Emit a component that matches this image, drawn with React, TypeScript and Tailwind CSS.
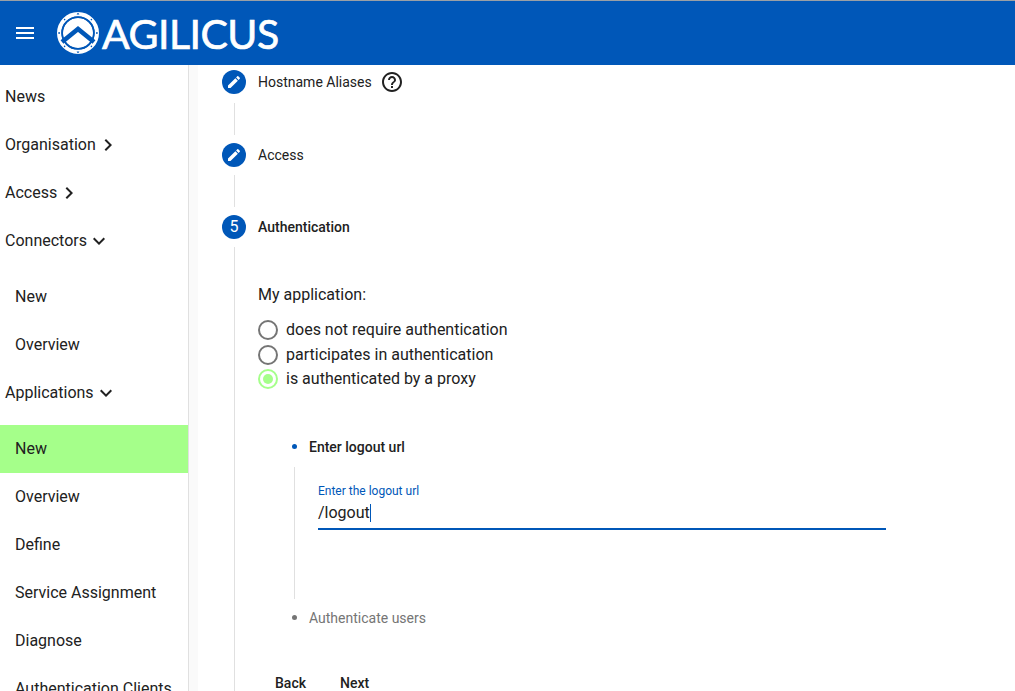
type NavItem = {
  label: string;
  sub?: boolean;
  active?: boolean;
  arrow?: "right" | "down";
  gap?: boolean;
};

const NAV: NavItem[] = [
  { label: "News" },
  { label: "Organisation", arrow: "right" },
  { label: "Access", arrow: "right" },
  { label: "Connectors", arrow: "down" },
  { label: "New", sub: true, gap: true },
  { label: "Overview", sub: true },
  { label: "Applications", arrow: "down" },
  { label: "New", sub: true, active: true, gap: true },
  { label: "Overview", sub: true },
  { label: "Define", sub: true },
  { label: "Service Assignment", sub: true },
  { label: "Diagnose", sub: true },
  { label: "Authentication Clients", sub: true },
];

// material icon paths
function Icon({ d, size = 24 }: { d: string; size?: number }) {
  return (
    <svg width={size} height={size} viewBox="0 0 24 24" fill="currentColor" className="shrink-0">
      <path d={d} />
    </svg>
  );
}

const MENU = "M3 18h18v-2H3v2zm0-5h18v-2H3v2zm0-7v2h18V6H3z";
const EDIT =
  "M3 17.25V21h3.75L17.81 9.94l-3.75-3.75L3 17.25zM20.71 7.04c.39-.39.39-1.02 0-1.41l-2.34-2.34c-.39-.39-1.02-.39-1.41 0l-1.83 1.83 3.75 3.75 1.83-1.83z";
const HELP =
  "M11 18h2v-2h-2v2zm1-16C6.48 2 2 6.48 2 12s4.48 10 10 10 10-4.48 10-10S17.52 2 12 2zm0 18c-4.41 0-8-3.59-8-8s3.59-8 8-8 8 3.59 8 8-3.59 8-8 8zm0-14c-2.21 0-4 1.79-4 4h2c0-1.1.9-2 2-2s2 .9 2 2c0 2-3 1.75-3 5h2c0-2.25 3-2.5 3-5 0-2.21-1.79-4-4-4z";
const CHEVRON_RIGHT = "M10 6L8.59 7.41 13.17 12l-4.58 4.59L10 18l6-6z";
const CHEVRON_DOWN = "M16.59 8.59L12 13.17 7.41 8.59 6 10l6 6 6-6z";

function Logo() {
  return (
    <svg width="44" height="44" viewBox="0 0 44 44" className="shrink-0">
      <circle cx="22" cy="22" r="18.9" fill="none" stroke="#fff" strokeWidth="4.2" />
      <circle cx="22" cy="22" r="15" fill="#fff" />
      <path d="M6 31 L22 18 L38 31" fill="none" stroke="#0057b8" strokeWidth="4.6" />
      <path d="M22 23 L32.6 31.6 A15 15 0 0 1 11.4 31.6 Z" fill="#fff" />
      <circle cx="22" cy="22" r="15.8" fill="none" stroke="#0057b8" strokeWidth="1.4" />
      <g fill="#0057b8">
        <path d="M22 1.6 l1.4 1.9 h-2.8 Z M22 42.4 l1.4 -1.9 h-2.8 Z" />
        <circle cx="3.1" cy="22" r="0.9" />
        <circle cx="40.9" cy="22" r="0.9" />
        <circle cx="8.6" cy="8.6" r="0.8" />
        <circle cx="35.4" cy="8.6" r="0.8" />
        <circle cx="8.6" cy="35.4" r="0.8" />
        <circle cx="35.4" cy="35.4" r="0.8" />
      </g>
    </svg>
  );
}

function StepIcon({ children }: { children: React.ReactNode }) {
  return (
    <div className="flex h-6 w-6 shrink-0 items-center justify-center rounded-full bg-[#0057b8] text-base text-white">
      {children}
    </div>
  );
}

function Radio({ label, checked }: { label: string; checked?: boolean }) {
  return (
    <div className="flex h-[24.5px] items-center gap-2">
      <div
        className={
          checked
            ? "flex h-5 w-5 items-center justify-center rounded-full border-2 border-[#a5ff8a]"
            : "flex h-5 w-5 items-center justify-center rounded-full border-2 border-[#757575]"
        }
      >
        {checked && <div className="h-2.5 w-2.5 rounded-full bg-[#a5ff8a]" />}
      </div>
      <span className="text-base text-[#212121]">{label}</span>
    </div>
  );
}

export default function App() {
  return (
    <div className="flex h-screen flex-col overflow-hidden bg-white font-['Roboto',sans-serif] text-[#212121]">
      <header className="flex h-[65px] shrink-0 items-center border-t border-[#9aa0a6] bg-[#0057b8] pl-[13px] text-white">
        <Icon d={MENU} />
        <div className="ml-[19px] flex items-center">
          <Logo />
          <span className="ml-[2px] font-['Lato',sans-serif] text-[41px] leading-none tracking-[-0.5px] [-webkit-text-stroke:0.7px_white]">
            AGILICUS
          </span>
        </div>
      </header>

      <div className="flex min-h-0 flex-1">
        {/* sidebar */}
        <nav className="w-[189px] shrink-0 overflow-hidden border-r border-[#e0e0e0] pt-2">
          {NAV.map((item, i) => (
            <div
              key={i}
              className={
                (item.gap ? "mt-2 " : "") +
                (item.active ? "bg-[#a5ff8a] " : "") +
                (item.sub ? "pl-[15px] " : "pl-[5px] ") +
                "flex h-12 items-center gap-0 whitespace-nowrap text-base"
              }
            >
              {item.label}
              {item.arrow === "right" && <Icon d={CHEVRON_RIGHT} />}
              {item.arrow === "down" && <Icon d={CHEVRON_DOWN} />}
            </div>
          ))}
        </nav>
        <div className="w-[9px] shrink-0 bg-[#fafafa]" />

        {/* stepper */}
        <main className="min-w-0 flex-1 overflow-hidden pl-6 pt-[5px]">
          <div className="flex h-6 items-center gap-3">
            <StepIcon>
              <Icon d={EDIT} size={16} />
            </StepIcon>
            <span className="text-sm">Hostname Aliases</span>
            <div className="-ml-1">
              <Icon d={HELP} />
            </div>
          </div>
          <div className="mb-2 ml-3 mt-[9px] h-8 w-px bg-[#e0e0e0]" />
          <div className="flex h-6 items-center gap-3">
            <StepIcon>
              <Icon d={EDIT} size={16} />
            </StepIcon>
            <span className="text-sm">Access</span>
          </div>
          <div className="my-2 ml-3 h-8 w-px bg-[#e0e0e0]" />
          <div className="flex h-6 items-center gap-3">
            <StepIcon>5</StepIcon>
            <span className="text-sm font-medium">Authentication</span>
          </div>

          <div className="ml-3 mt-2 border-l border-[#e0e0e0] pl-[23px] pt-[36px]">
            <p className="text-base leading-6">My application:</p>
            <div className="mt-[11px] flex flex-col">
              <Radio label="does not require authentication" />
              <Radio label="participates in authentication" />
              <Radio label="is authenticated by a proxy" checked />
            </div>

            <div className="ml-[34px] mt-[45px] flex h-5 items-center gap-3 text-sm font-medium">
              <span className="h-[5px] w-[5px] rounded-full bg-[#0057b8]" />
              Enter logout url
            </div>
            <div className="ml-[36px] mt-2.5 h-[132px] border-l border-[#e0e0e0] pl-[23px] pt-4">
              <div className="w-[568px] border-b-2 border-[#0057b8]">
                <div className="text-xs leading-4 text-[#0057b8]">Enter the logout url</div>
                <div className="flex h-[29px] items-center text-base">
                  /logout
                  <span className="h-[18px] w-px bg-[#0057b8]" />
                </div>
              </div>
            </div>
            <div className="ml-[34px] mt-[9px] flex h-5 items-center gap-3 text-sm text-[#757575]">
              <span className="h-[5px] w-[5px] rounded-full bg-[#757575]" />
              Authenticate users
            </div>
            <div className="ml-[17px] mt-[45px] flex gap-[34px] text-sm font-medium">
              <button>Back</button>
              <button>Next</button>
            </div>
          </div>
        </main>
      </div>
    </div>
  );
}
